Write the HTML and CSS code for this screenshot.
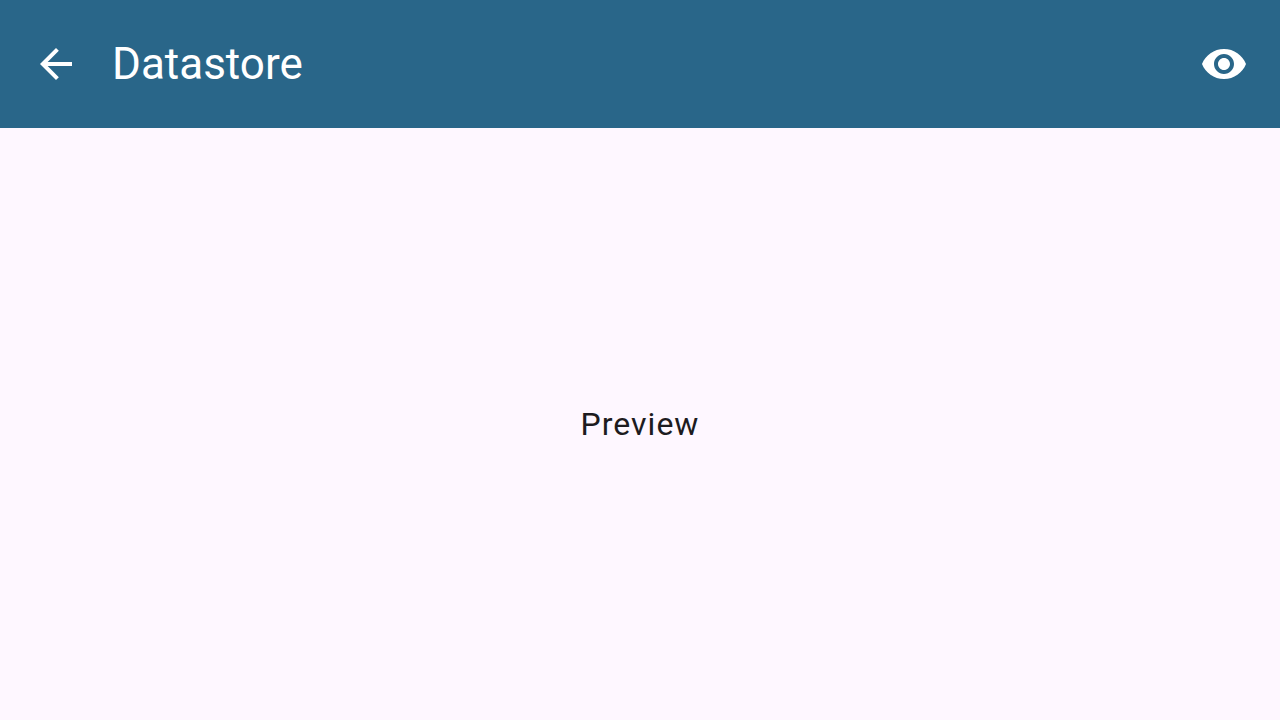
FILE: index.html
```
<!DOCTYPE html>
<html lang="en">
<head>
<meta charset="utf-8">
<meta name="viewport" content="width=device-width, initial-scale=1">
<title>Datastore</title>
<link rel="stylesheet" href="styles.css">
</head>
<body>
<header class="app-bar">
  <button class="icon-button" type="button" aria-label="Back">
    <svg class="icon" viewBox="0 0 24 24" aria-hidden="true"><path d="M20 11H7.83l5.59-5.59L12 4l-8 8 8 8 1.41-1.41L7.83 13H20v-2z"/></svg>
  </button>
  <h1 class="title">Datastore</h1>
  <button class="icon-button" type="button" aria-label="Show preview">
    <svg class="icon" viewBox="0 0 24 24" aria-hidden="true"><path d="M12 4.5C7 4.5 2.73 7.61 1 12c1.73 4.39 6 7.5 11 7.5s9.27-3.11 11-7.5c-1.73-4.39-6-7.5-11-7.5zM12 17c-2.76 0-5-2.24-5-5s2.24-5 5-5 5 2.24 5 5-2.24 5-5 5zm0-8c-1.66 0-3 1.34-3 3s1.34 3 3 3 3-1.34 3-3-1.34-3-3-3z"/></svg>
  </button>
</header>
<main class="content">
  <p class="message">Preview</p>
</main>
</body>
</html>
```
FILE: styles.css
```
body {
  margin: 0;
  min-height: 100vh;
  display: flex;
  flex-direction: column;
  background: #fef7ff;
  color: #1d1b20;
  font-family: Roboto, "Liberation Sans", sans-serif;
}

.app-bar {
  display: flex;
  align-items: center;
  padding: 16px 8px;
  background: #296689;
  color: #ffffff;
}

.icon-button {
  display: flex;
  align-items: center;
  justify-content: center;
  width: 96px;
  height: 96px;
  padding: 0;
  border: 0;
  border-radius: 50%;
  background: none;
  color: inherit;
  cursor: pointer;
}

.icon {
  width: 48px;
  height: 48px;
  fill: currentColor;
}

.title {
  flex: 1;
  margin: 0;
  padding-left: 8px;
  font-size: 44px;
  font-weight: 400;
  line-height: 56px;
}

.content {
  flex: 1;
  display: flex;
  align-items: center;
  justify-content: center;
}

.message {
  margin: 0;
  font-size: 32px;
  line-height: 48px;
  letter-spacing: 1px;
}
```
